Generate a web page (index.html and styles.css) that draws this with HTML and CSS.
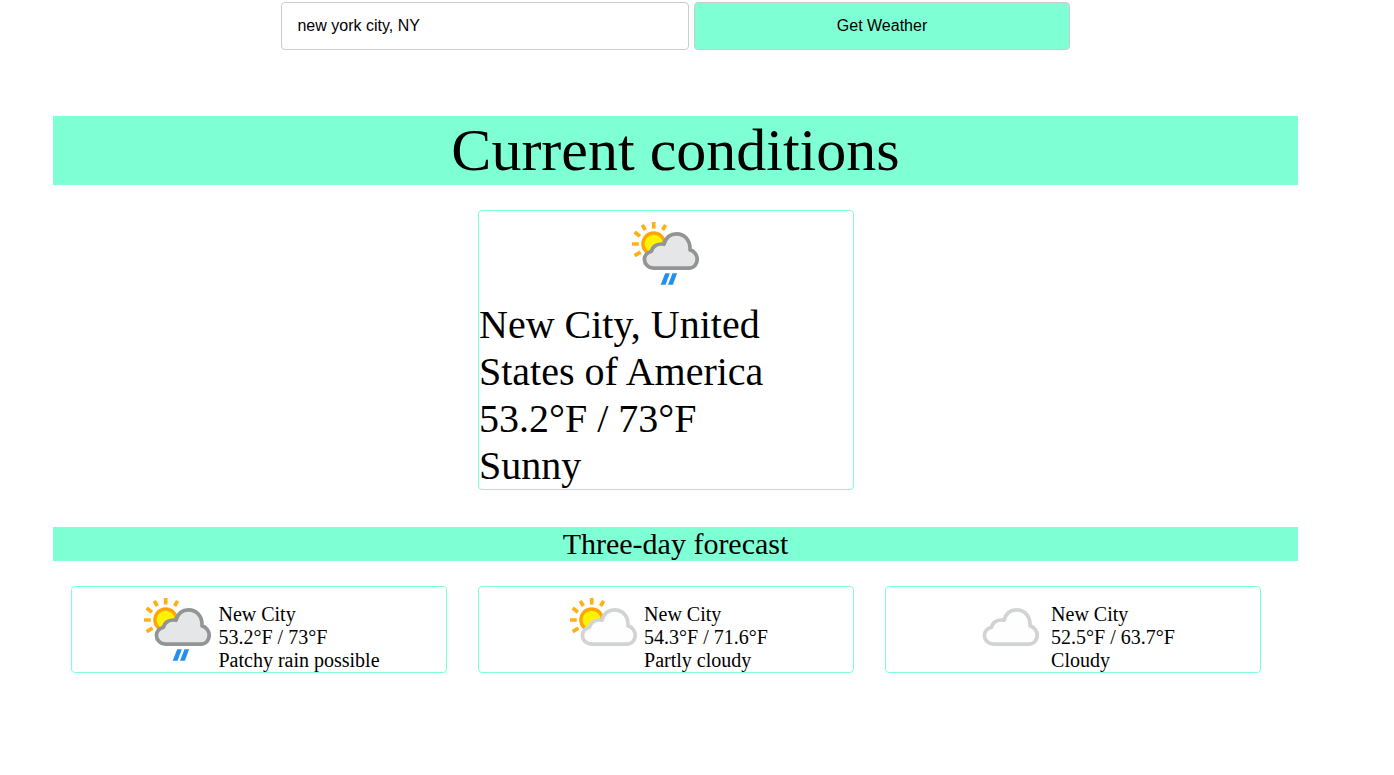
FILE: index.html
```html
<!DOCTYPE html>
<html lang="en">
<head>
<meta charset="utf-8">
<meta name="viewport" content="width=device-width, initial-scale=1">
<title>Weather</title>
<link rel="stylesheet" href="styles.css">
</head>
<body>
<svg class="defs" width="0" height="0" aria-hidden="true">
  <defs>
    <g id="sun">
      <circle cx="27.7" cy="32.8" r="10.8" fill="#fff200" stroke="#ffa50a" stroke-width="3.4"/>
      <path d="M27.7 11v6.6M6 33h6.8M16.3 13.8l3 5.2M39.6 13.8l-3 5.2M8.7 21l5.2 4.2M8.6 44.6l6-3.4" fill="none" stroke="#ffb012" stroke-width="3.7"/>
    </g>
    <path id="cloud" d="M27.5 57.2A9 9 0 0 1 18.4 48.5C18.4 44.5 21 41.6 25.5 40.2C26.5 35 32 32 38 33.3C39.8 26.8 44.5 22.9 50.5 22.9C58.5 22.9 64.5 29 64 38.9C68.2 40 71.2 44 71.2 48.3C71.2 53.5 67.5 57.2 62.5 57.2Z" stroke-width="3.7" stroke-linejoin="round"/>
    <path id="rain" d="M39.2 62.3h4.6l-4.2 11.4h-4.9zM46.5 62.3h4.6l-4.2 11.4H42z" fill="#2490ee"/>
  </defs>
</svg>
<main class="page">
  <form class="search">
    <input class="field" type="text" value="new york city, NY" aria-label="City">
    <button class="submit" type="button">Get Weather</button>
  </form>

  <h1 class="band band-large">Current conditions</h1>
  <section class="cards">
    <article class="card current">
      <svg class="icon" viewBox="0 0 80 80" aria-hidden="true"><use href="#sun"/><use href="#cloud" fill="#e5e6e8" stroke="#929496"/><use href="#rain"/></svg>
      <div class="details">
        <p>New City, United States of America</p>
        <p>53.2°F / 73°F</p>
        <p>Sunny</p>
      </div>
    </article>
  </section>

  <h2 class="band">Three-day forecast</h2>
  <section class="cards">
    <article class="card day">
      <svg class="icon" viewBox="0 0 80 80" aria-hidden="true"><use href="#sun"/><use href="#cloud" fill="#e5e6e8" stroke="#929496"/><use href="#rain"/></svg>
      <div class="details">
        <p>New City</p>
        <p>53.2°F / 73°F</p>
        <p>Patchy rain possible</p>
      </div>
    </article>
    <article class="card day">
      <svg class="icon" viewBox="0 0 80 80" aria-hidden="true"><use href="#sun"/><use href="#cloud" fill="#fefefe" stroke="#d2d3d4"/></svg>
      <div class="details">
        <p>New City</p>
        <p>54.3°F / 71.6°F</p>
        <p>Partly cloudy</p>
      </div>
    </article>
    <article class="card day">
      <svg class="icon" viewBox="5 0 80 80" aria-hidden="true"><use href="#cloud" fill="#fefefe" stroke="#d2d3d4"/></svg>
      <div class="details">
        <p>New City</p>
        <p>52.5°F / 63.7°F</p>
        <p>Cloudy</p>
      </div>
    </article>
  </section>
</main>
</body>
</html>
```

FILE: styles.css
```css
* {
  box-sizing: border-box;
}

body {
  margin: 0;
  background: #fff;
  color: #000;
  font-family: "Liberation Serif", "Times New Roman", serif;
}

.defs {
  position: absolute;
}

.page {
  margin: 0 96px 0 53px;
  padding-top: 2px;
}

.search {
  display: grid;
  grid-template-columns: 408fr 375fr;
  gap: 5px;
  width: 63.3%;
  margin: 0 auto 66px;
}

.field,
.submit {
  min-width: 0;
  height: 48px;
  border: 1px solid #ccc;
  border-radius: 4px;
  font: 16px "Liberation Sans", Arial, sans-serif;
  color: #000;
}

.field {
  padding: 0 15px;
  background: #fff;
}

.submit {
  background: aquamarine;
}

.band {
  margin: 0;
  background: aquamarine;
  font-size: 30px;
  font-weight: 400;
  line-height: 34px;
  text-align: center;
}

.band-large {
  font-size: 60px;
  line-height: 69px;
}

.cards {
  display: grid;
  grid-template-columns: repeat(3, 1fr);
  gap: 31px;
  margin: 25px 37px 37px 18px;
}

.card {
  display: flex;
  border: 1px solid aquamarine;
  border-radius: 4px;
}

.card p {
  margin: 0;
}

.icon {
  flex: none;
  width: 80px;
  height: 80px;
}

.current {
  grid-column: 2;
  flex-direction: column;
  gap: 10px;
  font-size: 40px;
  line-height: 47px;
}

.current .icon {
  align-self: center;
}

.day {
  justify-content: center;
  font-size: 20px;
  line-height: 23px;
}

.day .details {
  padding-top: 16px;
}
```
